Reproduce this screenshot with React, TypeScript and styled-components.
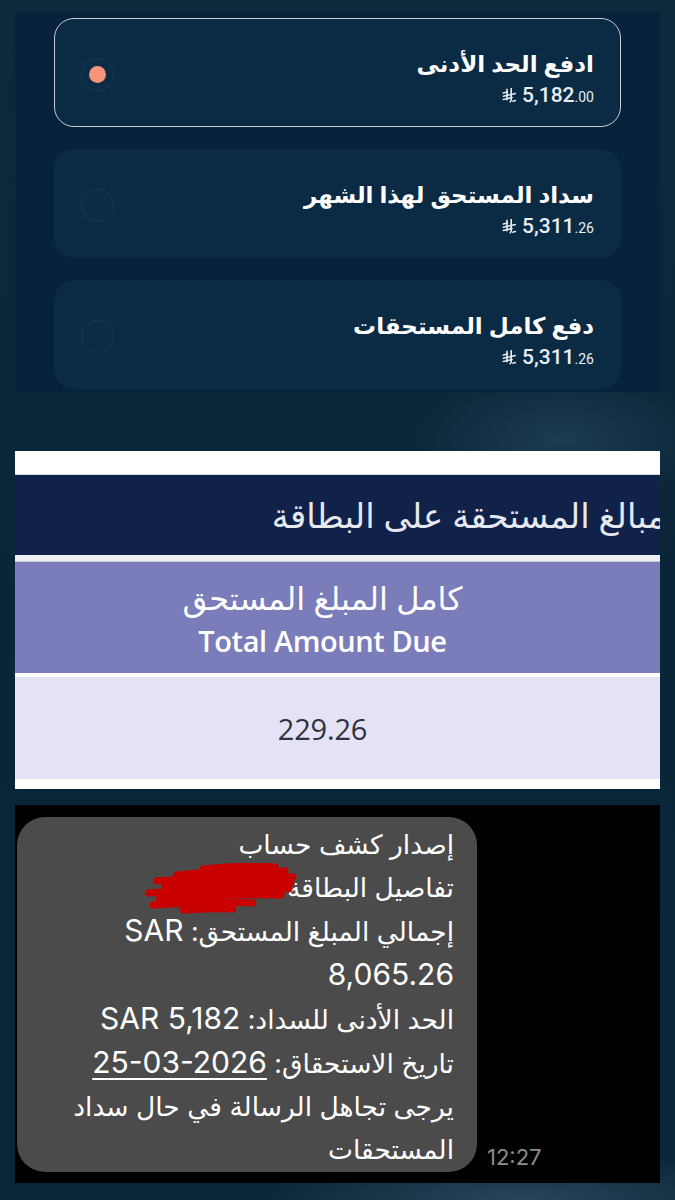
import styled, { createGlobalStyle } from 'styled-components';

const GlobalStyle = createGlobalStyle`
  html, body {
    margin: 0;
    padding: 0;
  }

  body {
    width: 675px;
    min-height: 1200px;
    background:
      radial-gradient(ellipse 150px 70px at 560px 440px, rgba(70, 110, 135, 0.3), transparent),
      radial-gradient(ellipse 260px 50px at 520px 1200px, rgba(80, 105, 130, 0.45), transparent),
      linear-gradient(180deg, #0d293c 0%, #0b2538 50%, #0c2639 100%);
    font-family: 'Noto Sans', 'DejaVu Sans', sans-serif;
  }
`;

type Option = {
  title: string;
  whole: string;
  cents: string;
  selected?: boolean;
};

const options: Option[] = [
  { title: 'ادفع الحد الأدنى', whole: '5,182', cents: '.00', selected: true },
  { title: 'سداد المستحق لهذا الشهر', whole: '5,311', cents: '.26' },
  { title: 'دفع كامل المستحقات', whole: '5,311', cents: '.26' },
];

const RiyalSign = () => (
  <svg width="15" height="15" viewBox="0 0 15 15" fill="none">
    <path
      d="M5 1.2v10.6M9.2 0.6v10.8c0 1-0.4 1.8-1 2.4"
      stroke="currentColor"
      strokeWidth="1.6"
      strokeLinecap="round"
    />
    <path
      d="M1.3 8.2l12-2.6M1.3 11.4l8.8-1.9M10.8 13.2l2.6-0.6M1.3 5l4.2-0.9"
      stroke="currentColor"
      strokeWidth="1.5"
      strokeLinecap="round"
    />
  </svg>
);

// red pen mark hiding the card number
const Scribble = () => (
  <ScribbleBox width="156" height="52" viewBox="0 0 156 52">
    <path
      d="M60 6 C90 3 115 2 132 4 M34 12 C70 8 110 6 142 8 M14 18 C60 14 110 12 150 14 M22 24 C70 20 110 19 148 20 M6 30 C50 26 100 25 146 26 M16 36 C60 32 100 31 138 32 M10 42 C50 40 80 38 110 40 M40 47 C60 46 75 45 90 46"
      stroke="#c80000"
      strokeWidth="7"
      strokeLinecap="round"
      fill="none"
    />
  </ScribbleBox>
);

const App = () => {
  return (
    <>
      <GlobalStyle />
      <Page>
        <OptionsPanel>
          {options.map((o) => (
            <OptionCard key={o.title} selected={!!o.selected}>
              <OptionText>
                <OptionTitle>{o.title}</OptionTitle>
                <Amount>
                  <RiyalSign />
                  <AmountWhole>{o.whole}</AmountWhole>
                  <AmountCents>{o.cents}</AmountCents>
                </Amount>
              </OptionText>
              <Radio>{o.selected && <RadioDot />}</Radio>
            </OptionCard>
          ))}
        </OptionsPanel>

        <TablePanel>
          <TopStrip />
          <HeaderBand>
            <HeaderText>المبالغ المستحقة على البطاقة</HeaderText>
          </HeaderBand>
          <Divider />
          <LabelBand>
            <LabelAr>كامل المبلغ المستحق</LabelAr>
            <LabelEn>Total Amount Due</LabelEn>
          </LabelBand>
          <ThinGap />
          <ValueBand>229.26</ValueBand>
          <BottomStrip />
        </TablePanel>

        <ChatPanel>
          <Bubble>
            <SmsLine>إصدار كشف حساب</SmsLine>
            <SmsLine>تفاصيل البطاقة</SmsLine>
            <SmsLine>
              إجمالي المبلغ المستحق: <Latin>SAR</Latin>
            </SmsLine>
            <SmsLine>
              <Latin>8,065.26</Latin>
            </SmsLine>
            <SmsLine>
              الحد الأدنى للسداد: <Latin>SAR 5,182</Latin>
            </SmsLine>
            <SmsLine>
              تاريخ الاستحقاق: <DateLink>25-03-2026</DateLink>
            </SmsLine>
            <SmsLine>يرجى تجاهل الرسالة في حال سداد</SmsLine>
            <SmsLine>المستحقات</SmsLine>
            <Scribble />
          </Bubble>
          <Time>12:27</Time>
        </ChatPanel>
      </Page>
    </>
  );
};

const Page = styled.div`
  display: flex;
  flex-direction: column;
  width: 675px;
  height: 1200px;
  padding-top: 12px;
  box-sizing: border-box;
`;

const OptionsPanel = styled.div`
  display: flex;
  flex-direction: column;
  gap: 22px;
  height: 380px;
  margin: 0 15px;
  padding: 6px 39px 0;
  box-sizing: border-box;
  background: #07223a;
`;

const OptionCard = styled.div<{ selected: boolean }>`
  display: flex;
  align-items: center;
  direction: rtl;
  height: 109px;
  padding: 10px 26px 0;
  box-sizing: border-box;
  border-radius: 20px;
  background: #0b2b45;
  border: 1.5px solid ${({ selected }) => (selected ? '#c7d0d9' : 'transparent')};
`;

const OptionText = styled.div`
  display: flex;
  flex-direction: column;
  gap: 2px;
`;

const OptionTitle = styled.div`
  font-size: 23px;
  font-weight: 700;
  line-height: 32px;
  color: #ffffff;
`;

const Amount = styled.div`
  display: flex;
  align-items: baseline;
  justify-content: flex-end;
  gap: 5px;
  direction: ltr;
  height: 28px;
  color: #e8eef3;
  font-family: 'Roboto', 'Inter', sans-serif;

  svg {
    align-self: center;
    margin-top: 2px;
  }
`;

const AmountWhole = styled.span`
  font-size: 21px;
  font-weight: 500;
  line-height: 28px;
`;

const AmountCents = styled.span`
  margin-left: -5px;
  font-size: 14px;
`;

const Radio = styled.div`
  display: flex;
  align-items: center;
  justify-content: center;
  width: 33px;
  height: 33px;
  margin-right: auto;
  margin-top: -7px;
  box-sizing: border-box;
  border-radius: 50%;
  border: 1.5px solid #133a55;
`;

const RadioDot = styled.div`
  width: 17px;
  height: 17px;
  border-radius: 50%;
  background: #f6937b;
`;

const TablePanel = styled.div`
  display: flex;
  flex-direction: column;
  height: 338px;
  margin: 59px 15px 0;
  background: #ffffff;
  overflow: hidden;
`;

const TopStrip = styled.div`
  height: 24px;
  border-bottom: 1px solid #d8dbe2;
  box-sizing: border-box;
`;

const HeaderBand = styled.div`
  display: flex;
  align-items: center;
  direction: rtl;
  height: 80px;
  background: #10224a;
  overflow: hidden;
`;

const HeaderText = styled.div`
  margin-right: -27px;
  white-space: nowrap;
  font-size: 34px;
  line-height: 42px;
  color: #e6e8f0;
`;

const Divider = styled.div`
  height: 7px;
  background: #eceef2;
  border-bottom: 1px solid #c9ccd8;
  box-sizing: border-box;
`;

const LabelBand = styled.div`
  display: flex;
  flex-direction: column;
  align-items: center;
  justify-content: center;
  height: 111px;
  padding-right: 30px;
  background: #7b7cba;
  color: #ffffff;
`;

const LabelAr = styled.div`
  font-size: 32px;
  line-height: 46px;
`;

const LabelEn = styled.div`
  font-family: 'Open Sans', sans-serif;
  font-size: 29px;
  font-weight: 600;
  line-height: 40px;
  letter-spacing: -0.4px;
`;

const ThinGap = styled.div`
  height: 4px;
  background: #ffffff;
`;

const ValueBand = styled.div`
  display: flex;
  align-items: center;
  justify-content: center;
  height: 102px;
  padding-right: 30px;
  background: #e4e2f4;
  color: #2e3340;
  font-family: 'Open Sans', sans-serif;
  font-size: 29px;
  letter-spacing: -0.2px;
`;

const BottomStrip = styled.div`
  height: 10px;
  background: #ffffff;
`;

const ChatPanel = styled.div`
  display: flex;
  align-items: flex-end;
  gap: 10px;
  height: 378px;
  margin: 16px 15px 0;
  padding: 12px 0 11px 2px;
  box-sizing: border-box;
  background: #000000;
`;

const Bubble = styled.div`
  position: relative;
  width: 460px;
  height: 355px;
  padding: 6px 23px 5px;
  box-sizing: border-box;
  border-radius: 28px;
  background: #4b4b4b;
  direction: rtl;
  text-align: right;
  color: #ffffff;
  font-family: 'Inter', 'DejaVu Sans', sans-serif;
  font-size: 26.5px;
  line-height: 43px;
`;

const SmsLine = styled.div`
  white-space: nowrap;
`;

const Latin = styled.span`
  font-size: 30px;
`;

const DateLink = styled.span`
  direction: ltr;
  unicode-bidi: isolate;
  font-size: 30px;
  text-decoration: underline;
  text-decoration-thickness: 2px;
  text-underline-offset: 5px;
`;

const ScribbleBox = styled.svg`
  position: absolute;
  left: 126px;
  top: 46px;
`;

const Time = styled.div`
  margin-bottom: 2px;
  font-family: 'Inter', sans-serif;
  font-size: 22px;
  line-height: 26px;
  color: #8c8c8c;
`;

export default App;
